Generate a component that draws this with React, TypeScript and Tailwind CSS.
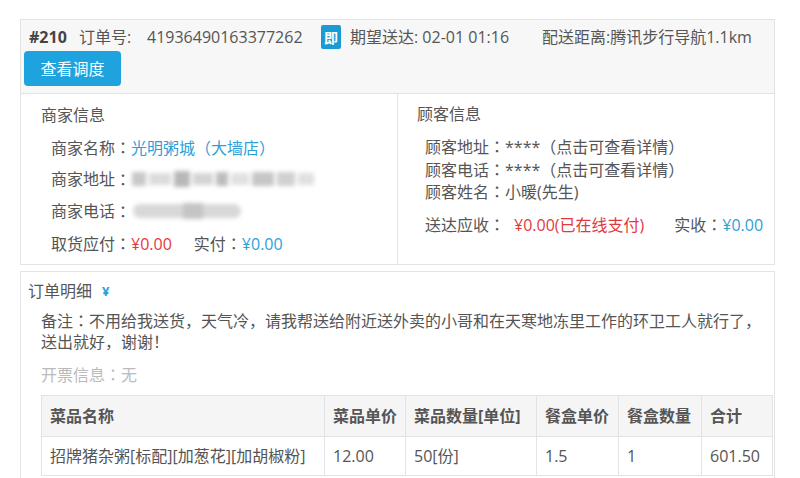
import React from "react";

const font = { fontFamily: '"Open Sans", "Noto Sans CJK SC", "Noto Sans", sans-serif' };
const tc = { fontFamily: '"Noto Sans CJK TC", sans-serif' };

const C = () => (
  <span className="inline-block w-[16px]" style={tc}>：</span>
);

export default function App() {
  return (
    <div className="w-[800px] h-[478px] bg-white overflow-hidden text-[16px] text-[#555]" style={font}>
      <div className="pt-[19px] pl-[20px] w-[775px]">
        {/* Card 1 */}
        <div className="border border-[#e3e3e3] bg-white">
          <div className="bg-[#f7f7f7] h-[74px] pl-[8px] pt-[4px] border-b border-[#e3e3e3]">
            <div className="flex items-center h-[26px] whitespace-nowrap">
              <span className="font-bold text-[#444] w-[50px]">#210</span>
              <span className="w-[68px]">订单号:</span>
              <span className="w-[174px]">41936490163377262</span>
              <span className="bg-[#1b9bd4] text-white text-[14px] font-bold w-[20px] h-[24px] flex items-center justify-center rounded-[2px] mr-[9px]">即</span>
              <span className="w-[192px]">期望送达: 02-01 01:16</span>
              <span>配送距离:腾讯步行导航1.1km</span>
            </div>
            <button className="mt-[1px] -ml-[5px] w-[97px] h-[35px] bg-[#1fa3df] text-white rounded-[4px] text-[16px]">查看调度</button>
          </div>
          <div className="grid grid-cols-[377px_1fr]">
            <div className="border-r border-[#e3e3e3] h-[170px] pl-[20px] pt-[10px]">
              <div className="leading-[22px]">商家信息</div>
              <div className="pl-[10px] mt-[10px] flex flex-col gap-[10px]">
                <div className="h-[22px] leading-[22px] whitespace-nowrap">商家名称<C /><span className="text-[#2d9fd8]">光明粥城（大墙店）</span></div>
                <div className="h-[22px] leading-[22px] flex items-center whitespace-nowrap">
                  商家地址<C />
                  <div className="flex items-center gap-[3px] ml-[1px] blur-[2px]">
                    <div className="w-[14px] h-[14px] bg-[#c8c8c8]" />
                    <div className="w-[22px] h-[12px] bg-[#dcdcdc]" />
                    <div className="w-[16px] h-[16px] bg-[#b8b8b8]" />
                    <div className="w-[20px] h-[12px] bg-[#d4d4d4]" />
                    <div className="w-[12px] h-[14px] bg-[#bdbdbd]" />
                    <div className="w-[18px] h-[12px] bg-[#e0e0e0]" />
                    <div className="w-[22px] h-[14px] bg-[#c6c6c6]" />
                    <div className="w-[18px] h-[14px] bg-[#d0d0d0]" />
                    <div className="w-[16px] h-[12px] bg-[#e0e0e0]" />
                  </div>
                </div>
                <div className="h-[22px] leading-[22px] flex items-center whitespace-nowrap">
                  商家电话<C />
                  <div className="flex items-center ml-[2px] blur-[2px]">
                    <div className="w-[50px] h-[14px] bg-[#d8d8d8] rounded-l-full" />
                    <div className="w-[20px] h-[16px] bg-[#c4c4c4]" />
                    <div className="w-[38px] h-[14px] bg-[#d8d8d8] rounded-r-full" />
                  </div>
                </div>
                <div className="h-[22px] leading-[22px] whitespace-nowrap">
                  取货应付<C /><span className="text-[#e4393c]">¥0.00</span>
                  <span className="ml-[22px]">实付</span><C /><span className="text-[#2d9fd8]">¥0.00</span>
                </div>
              </div>
            </div>
            <div className="pl-[19px] pt-[9px]">
              <div className="leading-[22px]">顾客信息</div>
              <div className="pl-[8px] mt-[11px] leading-[21.5px] whitespace-nowrap">
                <div>顾客地址<C />****（点击可查看详情）</div>
                <div>顾客电话<C />****（点击可查看详情）</div>
                <div>顾客姓名<C />小暖(先生)</div>
                <div className="mt-[10px]">
                  送达应收<C /><span className="text-[#e4393c] ml-[9px]">¥0.00(已在线支付)</span>
                  <span className="ml-[30px]">实收</span><C /><span className="text-[#2d9fd8]">¥0.00</span>
                </div>
              </div>
            </div>
          </div>
        </div>

        {/* Card 2 */}
        <div className="mt-[6px] border border-[#e3e3e3] border-b-0 h-[220px] pl-[7px] pt-[8px]">
          <div className="flex items-center leading-[22px]">
            订单明细
            <span className="ml-[10px] text-[#2d9fd8] font-bold text-[13px]">¥</span>
          </div>
          <div className="pl-[13px] mt-[8px] leading-[21px] whitespace-nowrap">
            备注<C />不用给我送货，天气冷，请我帮送给附近送外卖的小哥和在天寒地冻里工作的环卫工人就行了，<br />
            送出就好，谢谢！
          </div>
          <div className="pl-[13px] mt-[10px] leading-[22px] text-[#bbb]">开票信息<C />无</div>
          <table className="ml-[13px] mt-[9px] w-[732px] border-collapse text-left whitespace-nowrap">
            <thead>
              <tr className="bg-[#f5f5f5] h-[41px]">
                <th className="border border-[#e3e3e3] pl-[8px] font-bold w-[283px]">菜品名称</th>
                <th className="border border-[#e3e3e3] pl-[8px] font-bold w-[81px]">菜品单价</th>
                <th className="border border-[#e3e3e3] pl-[8px] font-bold w-[131px]">菜品数量[单位]</th>
                <th className="border border-[#e3e3e3] pl-[8px] font-bold w-[82px]">餐盒单价</th>
                <th className="border border-[#e3e3e3] pl-[8px] font-bold w-[83px]">餐盒数量</th>
                <th className="border border-[#e3e3e3] pl-[8px] font-bold">合计</th>
              </tr>
            </thead>
            <tbody>
              <tr className="h-[39px]">
                <td className="border border-[#e3e3e3] pl-[8px]">招牌猪杂粥[标配][加葱花][加胡椒粉]</td>
                <td className="border border-[#e3e3e3] pl-[8px]">12.00</td>
                <td className="border border-[#e3e3e3] pl-[8px]">50[份]</td>
                <td className="border border-[#e3e3e3] pl-[8px]">1.5</td>
                <td className="border border-[#e3e3e3] pl-[8px]">1</td>
                <td className="border border-[#e3e3e3] pl-[8px]">601.50</td>
              </tr>
            </tbody>
          </table>
        </div>
      </div>
    </div>
  );
}
